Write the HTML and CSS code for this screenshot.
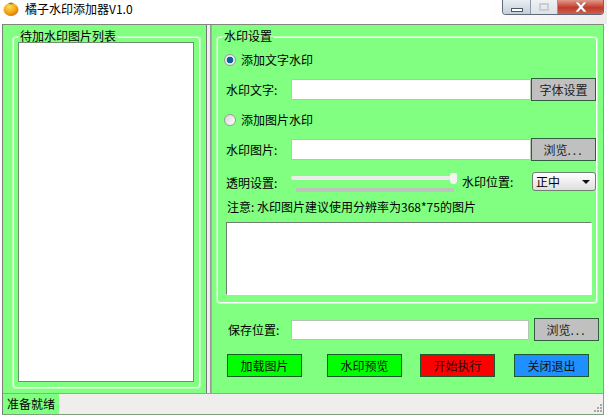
FILE: index.html
```html
<!DOCTYPE html>
<html lang="zh-CN">
<head>
<meta charset="utf-8">
<title>橘子水印添加器V1.0</title>
<link rel="stylesheet" href="styles.css">
</head>
<body>
<div class="titlebar">
  <svg class="app-icon" viewBox="0 0 16 16" aria-hidden="true">
    <defs><radialGradient id="orange" cx="0.4" cy="0.3" r="0.8"><stop offset="0" stop-color="#ffd95a"/><stop offset="0.6" stop-color="#f2a20f"/><stop offset="1" stop-color="#b9660a"/></radialGradient></defs>
    <ellipse cx="8" cy="8.500" rx="7.500" ry="6.500" fill="url(#orange)"/>
    <path d="M5 2.500q3-2 6 0l-3 1z" fill="#7a8f3a"/>
  </svg>
  <span class="title-text">橘子水印添加器V1.0</span>
  <div class="caption">
    <div class="cap cap-min"><span class="min-glyph"></span></div>
    <div class="cap cap-max"><span class="max-glyph"></span></div>
    <div class="cap cap-close"><svg viewBox="0 0 16 10" class="x-glyph" aria-hidden="true"><path d="M2 0h3.500l2.500 3 2.500-3h3.500l-4.300 5 4.300 5h-3.500l-2.500-3-2.500 3h-3.500l4.300-5z" fill="#fff" stroke="#8a4a40" stroke-width=".5"/></svg></div>
  </div>
</div>
<div class="window">
  <div class="panes">
    <section class="pane pane-left">
      <fieldset class="group group-list">
        <legend>待加水印图片列表</legend>
        <div class="listbox"></div>
      </fieldset>
    </section>
    <div class="splitter"></div>
    <section class="pane pane-right">
      <fieldset class="group group-settings">
        <legend>水印设置</legend>
        <div class="radio-row">
          <span class="radio radio-on"></span><span>添加文字水印</span>
        </div>
        <div class="row">
          <span class="label">水印文字:</span>
          <input class="field" type="text">
          <button class="btn-gray" type="button">字体设置</button>
        </div>
        <div class="radio-row radio-row-2">
          <span class="radio"></span><span>添加图片水印</span>
        </div>
        <div class="row">
          <span class="label">水印图片:</span>
          <input class="field" type="text">
          <button class="btn-gray" type="button">浏览<span class="dots">...</span></button>
        </div>
        <div class="slider-row">
          <span class="label">透明设置:</span>
          <div class="slider"><div class="track"></div><div class="thumb"></div><div class="shade"></div></div>
          <span class="pos-label">水印位置:</span>
          <div class="select"><span>正中</span><span class="arrow"></span></div>
        </div>
        <p class="note">注意: 水印图片建议使用分辨率为368*75的图片</p>
        <div class="memo"></div>
      </fieldset>
      <div class="save-row">
        <span class="label">保存位置:</span>
        <input class="field save-field" type="text">
        <button class="btn-gray" type="button">浏览<span class="dots">...</span></button>
      </div>
      <div class="actions">
        <button class="btn-act green" type="button">加载图片</button>
        <button class="btn-act green gap-a" type="button">水印预览</button>
        <button class="btn-act red gap-b" type="button">开始执行</button>
        <button class="btn-act blue gap-c" type="button">关闭退出</button>
      </div>
    </section>
  </div>
  <div class="statusbar">
    <span class="status-text">准备就绪</span>
    <svg class="grip" viewBox="0 0 10 10" aria-hidden="true"><path d="M8 1h2v2h-2zM5 4h2v2h-2zM8 4h2v2h-2zM2 7h2v2h-2zM5 7h2v2h-2zM8 7h2v2h-2z" fill="#a8a8a8"/></svg>
  </div>
</div>
</body>
</html>
```

FILE: styles.css
```css
* { box-sizing: border-box; }
html, body { margin: 0; height: 100%; }
body {
  width: 607px;
  height: 418px;
  overflow: hidden;
  background: #fff;
  font: 12px/14px "Noto Sans CJK SC", "Liberation Sans", sans-serif;
  color: #000;
}
.titlebar {
  height: 24px;
  display: flex;
  align-items: flex-start;
  background: linear-gradient(90deg, #fff 0, #fff 80%, #ececec 100%);
}
.app-icon { width: 16px; height: 16px; margin: 1px 0 0 3px; }
.title-text { margin: 2px 0 0 6px; }
.caption {
  margin-left: auto;
  margin-right: 3px;
  display: flex;
  width: 102px;
  height: 15px;
  border: 1px solid #5f6b78;
  border-top: 0;
  border-radius: 0 0 4px 4px;
  overflow: hidden;
}
.cap { display: flex; align-items: center; justify-content: center; }
.cap-min { width: 28px; background: linear-gradient(#e9eef3, #c5ced8); border-right: 1px solid #8d99a6; }
.cap-max { width: 27px; background: linear-gradient(#eef1f4, #dde2e7); border-right: 1px solid #8d99a6; }
.cap-close { flex: 1; background: linear-gradient(#e29a8c, #c0392b 55%, #d0604f); }
.min-glyph { width: 12px; height: 4px; margin-top: 5px; background: #fff; border: 1px solid #4c5966; }
.max-glyph { width: 10px; height: 8px; border: 2px solid #c9ced3; }
.x-glyph { width: 16px; height: 10px; }

.window {
  margin: 0 3px 0 2px;
  height: 391px;
  display: flex;
  flex-direction: column;
  border-left: 1px solid #777f77;
  border-right: 1px solid #8f9b8f;
  border-bottom: 1px solid #7f9f7f;
}
.panes { display: flex; height: 369px; border-top: 1px solid #7f877f; }
.pane { background: #80ff80; height: 100%; }
.pane-left { width: 204px; padding: 5px 0 0 10px; border-right: 1px solid #777; }
.splitter { width: 4px; background: #f0f0f0; border-right: 1px solid #999; }
.pane-right { flex: 1; padding: 5px 0 0 5px; border-left: 1px solid #aaa; }

.group {
  margin: 0;
  padding: 0;
  border: 1px solid #fff;
  border-radius: 3px;
  box-shadow: 0 0 0 1px #bdffbd;
  min-width: 0;
}
.group legend { padding: 0 2px 2px; line-height: 12px; }
.group-list { width: 187px; height: 358px; padding: 0 4px; }
.group-list legend { margin-left: 0; }
.listbox {
  width: 176px;
  height: 340px;
  margin-top: -2px;
  background: #fff;
  border: 1px solid #6f8f6f;
}
.group-settings { width: 380px; height: 273px; padding: 6px 0 0 8px; }
.group-settings legend { margin-left: -4px; }

.radio-row { height: 20px; display: flex; align-items: center; gap: 5px; margin-left: -2px; }
.radio-row-2 { margin-top: 9px; }
.radio {
  width: 12px;
  height: 12px;
  border-radius: 50%;
  border: 1px solid #9a9a9a;
  background: linear-gradient(135deg, #d8d8d8, #fff);
}
.radio-on { background: radial-gradient(circle, #0c5f9a 0 3px, #e4ecef 3.6px); }

.row {
  display: grid;
  grid-template-columns: 65px 240px 65px;
  height: 23px;
  margin-top: 8px;
  align-items: center;
}
.label { white-space: nowrap; }
.field {
  height: 21px;
  width: 100%;
  margin: 0;
  background: #fff;
  border: 1px solid #b5c5b5;
  border-radius: 1px;
  padding: 0;
}
.btn-gray {
  height: 23px;
  width: 65px;
  padding: 0;
  background: #c0c0c0;
  border: 1px solid #2f5f3f;
  font: inherit;
  color: #222;
}
.dots { letter-spacing: 2px; }
.slider-row {
  display: flex;
  align-items: flex-start;
  height: 20px;
  margin-top: 11px;
}
.slider-row .label { width: 65px; padding-top: 4px; }
.slider { width: 167px; height: 20px; position: relative; }
.track { height: 4px; margin: 4px 6px 0 0; background: #ececec; border-radius: 2px; }
.thumb {
  position: absolute;
  left: 159px;
  top: 1px;
  width: 7px;
  height: 11px;
  background: #f4f4f4;
  border-radius: 2px 2px 4px 4px;
}
.shade { height: 4px; margin: 8px 4px 0 5px; background: #bcc4bc; }
.pos-label { margin: 3px 0 0 4px; width: 70px; white-space: nowrap; }
.select {
  width: 64px;
  height: 19px;
  display: flex;
  align-items: center;
  justify-content: space-between;
  padding: 0 5px 0 3px;
  background: linear-gradient(#fff, #dedede);
  border: 1px solid #708070;
  border-radius: 3px;
}
.arrow { width: 0; height: 0; border: 4px solid transparent; border-top: 4px solid #111; border-bottom: 0; }
.note { margin: 8px 0 0 1px; height: 14px; white-space: nowrap; }
.memo {
  width: 366px;
  height: 73px;
  margin-top: 8px;
  background: #fff;
  border: 1px solid #fff;
  border-top-color: #6f7f6f;
  border-left-color: #6f7f6f;
}
.save-row {
  display: flex;
  align-items: center;
  height: 23px;
  margin: 15px 0 0 11px;
}
.save-row .label { width: 63px; }
.save-field { width: 238px; height: 20px; margin-right: 5px; }
.actions { display: flex; margin: 13px 0 0 10px; }
.btn-act {
  width: 75px;
  height: 23px;
  padding: 0;
  border: 1px solid #1c5c2c;
  font: inherit;
  color: #111;
}
.gap-a { margin-left: 25px; }
.gap-b { margin-left: 18px; }
.gap-c { margin-left: 19px; }
.green { background: #00ff00; }
.red { background: #ff0000; }
.blue { background: #1e90ff; }

.statusbar {
  flex: 1;
  display: flex;
  justify-content: space-between;
  align-items: stretch;
  background: #f0eded;
  border-top: 1px solid #a0a0a0;
}
.status-text {
  width: 56px;
  background: #80ff80;
  padding: 3px 0 0 4px;
  white-space: nowrap;
  overflow: hidden;
}
.grip { width: 10px; height: 10px; align-self: flex-end; margin: 0 1px 1px 0; }
```
